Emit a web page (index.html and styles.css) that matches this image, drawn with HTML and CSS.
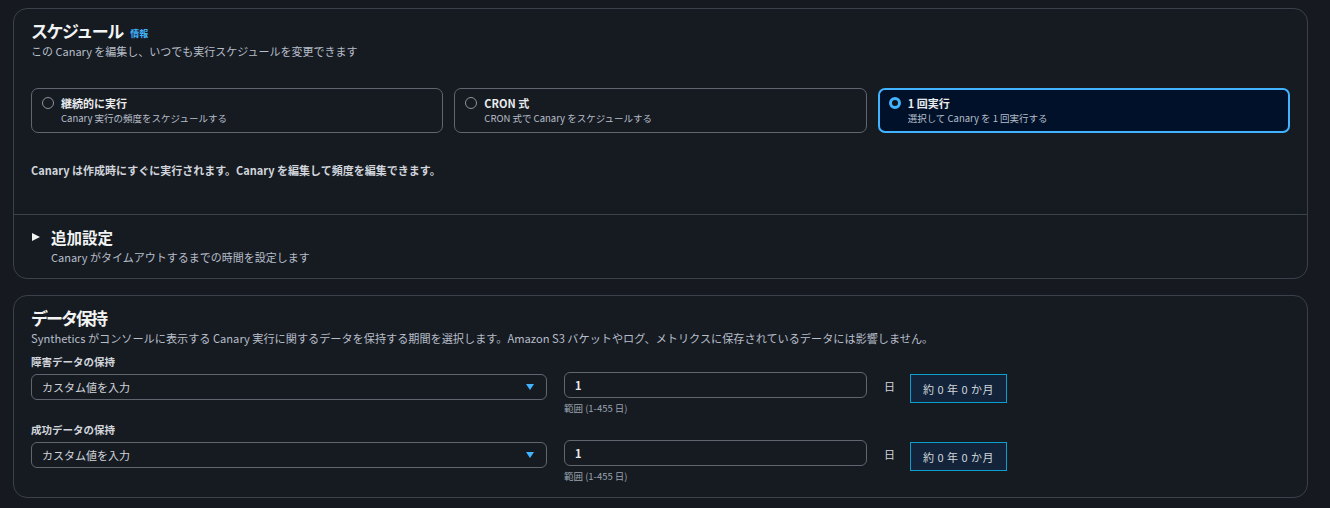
FILE: index.html
```html
<!DOCTYPE html>
<html lang="ja">
<head>
    <meta charset="UTF-8">
    <meta name="viewport" content="width=device-width, initial-scale=1.0">
    <title>Canary スケジュール</title>
    <link rel="stylesheet" href="styles.css">
</head>
<body>
    <div class="page">
        <section class="container">
            <div class="container-body">
                <div class="header">
                    <h2>スケジュール <a class="info-link" href="#">情報</a></h2>
                    <p class="header-desc">この Canary を編集し、いつでも実行スケジュールを変更できます</p>
                </div>

                <div class="tiles">
                    <label class="tile">
                        <span class="radio"></span>
                        <span class="tile-text">
                            <span class="tile-label">継続的に実行</span>
                            <span class="tile-desc">Canary 実行の頻度をスケジュールする</span>
                        </span>
                    </label>
                    <label class="tile">
                        <span class="radio"></span>
                        <span class="tile-text">
                            <span class="tile-label">CRON 式</span>
                            <span class="tile-desc">CRON 式で Canary をスケジュールする</span>
                        </span>
                    </label>
                    <label class="tile selected">
                        <span class="radio checked"></span>
                        <span class="tile-text">
                            <span class="tile-label">1 回実行</span>
                            <span class="tile-desc">選択して Canary を 1 回実行する</span>
                        </span>
                    </label>
                </div>

                <p class="note">Canary は作成時にすぐに実行されます。Canary を編集して頻度を編集できます。</p>
            </div>

            <div class="expand">
                <div class="expand-head">
                    <span class="caret"></span>
                    <span class="expand-title">追加設定</span>
                </div>
                <p class="expand-desc">Canary がタイムアウトするまでの時間を設定します</p>
            </div>
        </section>

        <section class="container">
            <div class="container-body retention">
                <div class="header">
                    <h2 class="tight">データ保持</h2>
                    <p class="header-desc wide">Synthetics がコンソールに表示する Canary 実行に関するデータを保持する期間を選択します。Amazon S3 バケットやログ、メトリクスに保存されているデータには影響しません。</p>
                </div>

                <div class="field">
                    <div class="field-label">障害データの保持</div>
                    <div class="field-row">
                        <div class="select">
                            <span>カスタム値を入力</span>
                            <span class="select-arrow"></span>
                        </div>
                        <div class="input-wrap">
                            <div class="input">1</div>
                            <div class="hint">範囲 (1-455 日)</div>
                        </div>
                        <span class="unit">日</span>
                        <div class="approx">約 0 年 0 か月</div>
                    </div>
                </div>

                <div class="field">
                    <div class="field-label">成功データの保持</div>
                    <div class="field-row">
                        <div class="select">
                            <span>カスタム値を入力</span>
                            <span class="select-arrow"></span>
                        </div>
                        <div class="input-wrap">
                            <div class="input">1</div>
                            <div class="hint">範囲 (1-455 日)</div>
                        </div>
                        <span class="unit">日</span>
                        <div class="approx">約 0 年 0 か月</div>
                    </div>
                </div>
            </div>
        </section>
    </div>
</body>
</html>
```

FILE: styles.css
```css
* {
    box-sizing: border-box;
}

body {
    margin: 0;
    background-color: #16191f;
    color: #d1d5db;
    font-family: 'Noto Sans CJK JP', 'Noto Sans', sans-serif;
    font-size: 11px;
}

.page {
    padding: 8px 22px 10px 13px;
    display: flex;
    flex-direction: column;
    gap: 16px;
}

.container {
    border: 1px solid #3b414b;
    border-radius: 14px;
    background-color: #161b22;
}

.container-body {
    padding: 10px 17px 0 17px;
}

.header h2 {
    margin: 0;
    font-size: 17px;
    font-weight: 700;
    color: #f2f3f3;
    line-height: 24px;
    letter-spacing: -1.5px;
}

.header h2.tight {
    letter-spacing: -2px;
}

.info-link {
    color: #42b4ff;
    font-size: 9px;
    font-weight: 700;
    text-decoration: none;
    margin-left: 5px;
    letter-spacing: 0;
    line-height: 1;
    vertical-align: 1px;
}

.header-desc {
    margin: 0;
    font-size: 11px;
    color: #b6bec9;
    line-height: 16px;
}

.header-desc.wide {
    font-size: 11.15px;
}

.tiles {
    display: grid;
    grid-template-columns: repeat(3, 1fr);
    gap: 11px;
    margin-top: 29px;
}

.tile {
    display: flex;
    gap: 7px;
    height: 45px;
    padding: 6px 10px;
    border: 1px solid #5f6670;
    border-radius: 7px;
}

.tile.selected {
    border: 2px solid #42b4ff;
    background-color: #001129;
    padding: 5px 9px;
}

.radio {
    width: 12px;
    height: 12px;
    margin-top: 2px;
    border: 1px solid #8c939e;
    border-radius: 50%;
    flex-shrink: 0;
}

.radio.checked {
    border: 3.5px solid #42b4ff;
    background-color: #0f141a;
}

.tile-text {
    display: flex;
    flex-direction: column;
}

.tile-label {
    font-size: 11px;
    font-weight: 700;
    color: #e9ebed;
    line-height: 16px;
}

.tile-desc {
    font-size: 9.5px;
    color: #b6bec9;
    line-height: 14px;
}

.note {
    margin: 29px 0 0 0;
    padding-bottom: 36px;
    font-size: 11px;
    font-weight: 700;
    color: #d1d5db;
    line-height: 16px;
}

.expand {
    border-top: 1px solid #3b414b;
    padding: 12px 17px 13px 18px;
}

.expand-head {
    display: flex;
    align-items: center;
    gap: 11px;
}

.caret {
    width: 0;
    height: 0;
    border-top: 4.5px solid transparent;
    border-bottom: 4.5px solid transparent;
    border-left: 8px solid #f2f3f3;
}

.expand-title {
    font-size: 15.5px;
    font-weight: 700;
    color: #f2f3f3;
    line-height: 20px;
}

.expand-desc {
    margin: 2px 0 0 19px;
    font-size: 11px;
    color: #b6bec9;
    line-height: 16px;
}

.retention {
    padding-bottom: 13px;
}

.field {
    margin-top: 8px;
}

.field + .field {
    margin-top: 6px;
}

.field-label {
    font-size: 10.5px;
    font-weight: 700;
    color: #d1d5db;
    line-height: 16px;
    margin-bottom: 2px;
}

.field-row {
    display: flex;
    align-items: flex-start;
}

.select {
    width: 516px;
    height: 26px;
    margin-top: 2px;
    display: flex;
    align-items: center;
    justify-content: space-between;
    padding: 0 12px 0 10px;
    border: 1px solid #5f6670;
    border-radius: 6px;
    font-size: 11px;
    color: #d1d5db;
}

.select-arrow {
    width: 0;
    height: 0;
    border-left: 4px solid transparent;
    border-right: 4px solid transparent;
    border-top: 6px solid #42b4ff;
}

.input-wrap {
    margin-left: 17px;
    width: 303px;
}

.input {
    height: 26px;
    padding: 0 10px;
    display: flex;
    align-items: center;
    border: 1px solid #5f6670;
    border-radius: 6px;
    font-size: 11px;
    font-weight: 700;
    color: #e9ebed;
}

.hint {
    margin-top: 2px;
    font-size: 9.5px;
    color: #9ba3ad;
    line-height: 16px;
}

.unit {
    margin-left: 17px;
    margin-top: 6px;
    font-size: 11px;
    color: #d1d5db;
}

.approx {
    margin-left: 15px;
    margin-top: 2px;
    width: 97px;
    height: 29px;
    display: flex;
    align-items: center;
    justify-content: center;
    border: 1px solid #0a9fcf;
    background-color: #13243a;
    font-size: 11px;
    color: #d1d5db;
    letter-spacing: 0.5px;
}
```
